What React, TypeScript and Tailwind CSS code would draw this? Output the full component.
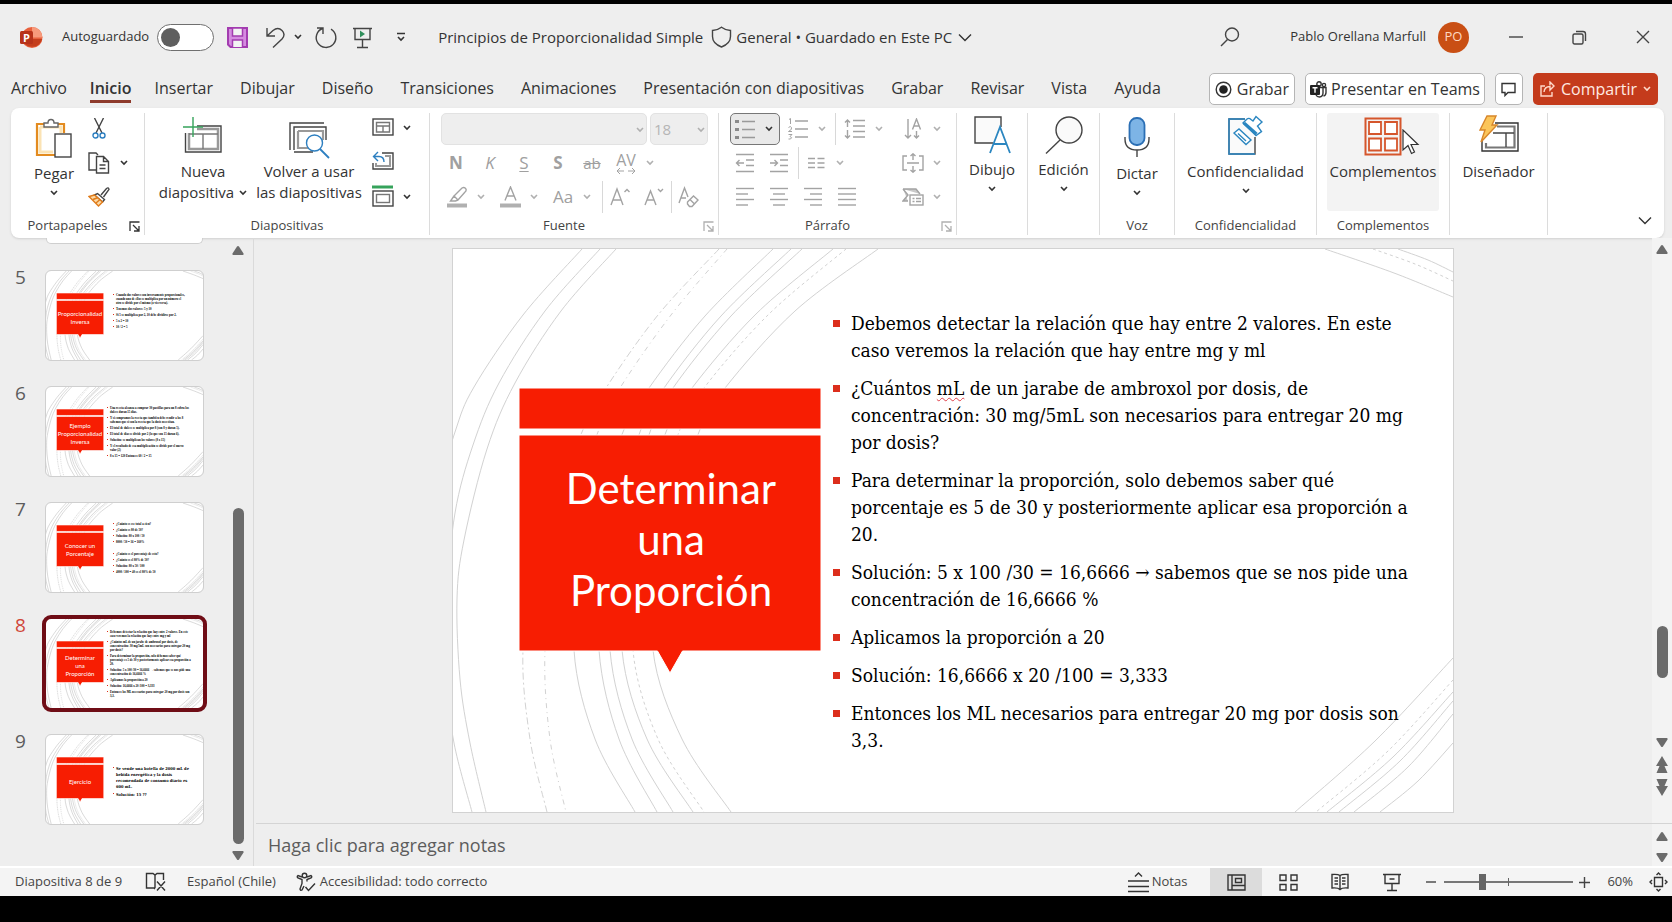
import type { ReactNode } from "react";

type Kids = { children?: ReactNode };

/* ---------- shared icon pieces ---------- */

function Svg({ w, h, children }: Kids & { w: number; h: number }) {
  return (
    <svg width={w} height={h} viewBox={`0 0 ${w} ${h}`} fill="none" stroke="#444" strokeWidth="1.4" className="block shrink-0" aria-hidden="true">
      {children}
    </svg>
  );
}

function Chev({ muted = false }: { muted?: boolean }) {
  return (
    <svg width="8" height="6" viewBox="0 0 8 6" fill="none" stroke={muted ? "#b0b0b0" : "#333"} strokeWidth="1.6" className="block shrink-0" aria-hidden="true">
      <path d="M1 1l3 3 3-3" />
    </svg>
  );
}

function BigChev() {
  return (
    <Svg w={14} h={9}>
      <path d="M1 1.5l6 6 6-6" stroke="#333" />
    </Svg>
  );
}

function Launcher({ muted = false }: { muted?: boolean }) {
  return (
    <svg width="11" height="11" viewBox="0 0 11 11" fill="none" stroke={muted ? "#b0b0b0" : "#333"} strokeWidth="1.3" className="block" aria-hidden="true">
      <path d="M1 10V1h9.5M4 4l5.5 5.5M10 5v5H5" />
    </svg>
  );
}

function Tri({ down = false }: { down?: boolean }) {
  return (
    <svg width="12" height="9" viewBox="0 0 12 9" fill="#6b6b6b" className="block" aria-hidden="true">
      <path d={down ? "M1 0h10q1 .6.5 1.6L7 8.4q-1 1-2 0L.5 1.6Q0 .6 1 0z" : "M1 9h10q1-.6.5-1.6L7 .6q-1-1-2 0L.5 7.400Q0 8.400 1 9z"} />
    </svg>
  );
}

function DoubleTri({ down = false }: { down?: boolean }) {
  return (
    <svg width="12" height="17" viewBox="0 0 12 17" fill="#6b6b6b" className="block" aria-hidden="true">
      <path d={down ? "M.5 0h11L8.500 7H12L6 17 0 7h3.500z" : "M6 0l6 10H8.500l3 7H.5l3-7H0z"} />
    </svg>
  );
}

/* ---------- title bar ---------- */

function TitleBar() {
  return (
    <header className="flex h-[66px] items-center whitespace-nowrap pl-5 pr-[22px] text-[#333]">
      <svg width="23" height="23" viewBox="0 0 23 23" className="shrink-0" aria-hidden="true">
        <circle cx="12" cy="11.500" r="10.500" fill="#e8603c" />
        <path d="M12 1a10.500 10.500 0 0 1 10.500 10.500H12z" fill="#f79a7b" />
        <path d="M2 13h20.300A10.500 10.500 0 0 1 2 13z" fill="#c43e1c" />
        <rect x="0" y="5" width="13" height="13" rx="1.500" fill="#b7331a" />
        <text x="3" y="15.500" fontSize="11" fontWeight="700" fill="#fff" fontFamily="Open Sans, sans-serif">P</text>
      </svg>
      <label className="ml-[19px] flex items-center gap-2 text-[13px]">
        Autoguardado
        <input type="checkbox" className="peer sr-only" />
        <span className="flex h-[27px] w-[57px] items-center rounded-full border border-[#6f6f6f] bg-white px-[3px]">
          <span className="size-[19px] rounded-full bg-[#5f5f5f]" />
        </span>
      </label>
      <div className="ml-3 flex items-center">
        <button type="button" aria-label="Guardar">
          <Svg w={23} h={23}>
            <path d="M2 2h19v19H4.500L2 18.500z" fill="#d58be0" stroke="#a33cb0" strokeWidth="2" />
            <path d="M6.500 2h10v8h-10zM6.500 21v-7h10v7" fill="#f3f3f3" stroke="#a33cb0" strokeWidth="1.500" />
          </Svg>
        </button>
        <button type="button" aria-label="Deshacer" className="ml-4 flex items-center gap-[8px]">
          <Svg w={21} h={23}>
            <path d="M2 2v8h8M2.500 9.500L8 4.500Q13 .5 17 4.500T17 13l-9 8.500" />
          </Svg>
          <Chev />
        </button>
        <button type="button" aria-label="Rehacer" className="ml-[12px]">
          <Svg w={24} h={23}>
            <path d="M3 2h6v6M8.500 2.500A9.800 9.800 0 1 0 17 3.200" />
          </Svg>
        </button>
        <button type="button" aria-label="Presentar desde el principio" className="ml-[14px]">
          <Svg w={21} h={23}>
            <path d="M1 2.500h19M3 2.500v11h15v-11M10.500 14v7M5 21.500h11" />
            <path d="M8 4.500l5 3.500-5 3.500z" fill="#2f8f5b" stroke="none" />
          </Svg>
        </button>
        <button type="button" aria-label="Personalizar barra" className="ml-[23px]">
          <Svg w={10} h={10}>
            <path d="M1 1.500h8M2 5l3 3 3-3" stroke="#333" strokeWidth="1.600" />
          </Svg>
        </button>
      </div>
      <div className="ml-[32px] flex items-center text-[15px]">
        <span>Principios de Proporcionalidad Simple</span>
        <span className="ml-[8px]">
          <Svg w={21} h={22}>
            <path d="M10.500 1.200Q14 4 19.500 4.500v6q0 7-9 10.500-9-3.500-9-10.500v-6Q7 4 10.500 1.200z" />
          </Svg>
        </span>
        <span className="ml-[4px]">General • Guardado en Este PC</span>
        <span className="ml-[6px]"><BigChev /></span>
      </div>
      <button type="button" aria-label="Buscar" className="ml-auto">
        <Svg w={20} h={20}>
          <circle cx="12" cy="7.500" r="6.500" />
          <path d="M7.500 12.500L1 19" />
        </Svg>
      </button>
      <span className="ml-[50px] text-[13px]">Pablo Orellana Marfull</span>
      <span className="ml-[12px] flex size-[31px] items-center justify-center rounded-full bg-[#c94f14] text-[13px] text-[#ffd9c2]">PO</span>
      <button type="button" aria-label="Minimizar" className="ml-[40px]">
        <Svg w={14} h={14}><path d="M0 7h14" /></Svg>
      </button>
      <button type="button" aria-label="Restaurar" className="ml-[49px]">
        <Svg w={15} h={15}>
          <rect x="1" y="4" width="10" height="10" rx="1.500" />
          <path d="M4 1.500h7q2.500 0 2.500 2.500v7" />
        </Svg>
      </button>
      <button type="button" aria-label="Cerrar" className="ml-[49px]">
        <Svg w={14} h={14}><path d="M1 1l12 12M13 1L1 13" /></Svg>
      </button>
    </header>
  );
}

/* ---------- tabs ---------- */

const tabs = ["Archivo", "Inicio", "Insertar", "Dibujar", "Diseño", "Transiciones", "Animaciones", "Presentación con diapositivas", "Grabar", "Revisar", "Vista", "Ayuda"];

function TabRow() {
  return (
    <div className="flex h-[38px] items-center justify-between whitespace-nowrap pl-[11px] pr-[14px] text-[#333]">
      <nav className="flex items-center gap-[27px] text-[16px]">
        {tabs.map((t) =>
          t === "Inicio" ? (
            <button key={t} type="button" className="-mx-1 border-b-[3px] border-[#8e3b2c] font-semibold leading-6">{t}</button>
          ) : (
            <button key={t} type="button" className="border-b-[3px] border-transparent leading-6">{t}</button>
          ),
        )}
      </nav>
      <div className="flex gap-[10px] text-[16px]">
        <button type="button" className="flex h-8 items-center gap-[5px] rounded-[5px] border border-[#b5b5b5] bg-white px-[5px]">
          <Svg w={17} h={17}>
            <circle cx="8.500" cy="8.500" r="7.300" stroke="#333" />
            <circle cx="8.500" cy="8.500" r="4.300" fill="#222" stroke="none" />
          </Svg>
          Grabar
        </button>
        <button type="button" className="flex h-8 items-center gap-[4px] rounded-[5px] border border-[#b5b5b5] bg-white px-[4px]">
          <Svg w={17} h={17}>
            <circle cx="9" cy="3" r="2.200" stroke="#333" />
            <circle cx="14" cy="4" r="1.600" stroke="#333" />
            <path d="M9 6.500h7v5q0 3-2.500 3.500M6 14q1 2 3.500 2 3.500-.5 3.500-4V6.500" stroke="#333" />
            <rect x="0" y="4" width="10" height="10" rx="1" fill="#222" stroke="none" />
            <path d="M2.500 6.700h5M5 6.700v5" stroke="#fff" />
          </Svg>
          Presentar en Teams
        </button>
        <button type="button" aria-label="Comentarios" className="flex h-8 w-7 items-center justify-center rounded-[5px] border border-[#b5b5b5] bg-white">
          <Svg w={15} h={15}><path d="M1 1.500h13v9H7l-3 3v-3H1z" stroke="#333" /></Svg>
        </button>
        <button type="button" className="flex h-8 items-center gap-[6px] rounded-[5px] bg-[#c43b1c] px-[7px] text-[#ffeae2]">
          <Svg w={15} h={16}>
            <path d="M5 5H1v10h11v-4M4 11q.5-5.500 6-5.500V9l4-4-4-4v3.200" stroke="#ffd9c9" />
          </Svg>
          Compartir
          <svg width="8" height="6" viewBox="0 0 8 6" fill="none" stroke="#ffd9c9" strokeWidth="1.600" aria-hidden="true"><path d="M1 1l3 3 3-3" /></svg>
        </button>
      </div>
    </div>
  );
}

/* ---------- ribbon ---------- */

function Group({ label, className, launcher, children }: Kids & { label?: string; className: string; launcher?: ReactNode }) {
  return (
    <section className={`relative flex shrink-0 flex-col border-r border-[#dcdcdc] ${className}`}>
      <div className="h-[102px]">{children}</div>
      <div className={`flex h-[20px] items-center justify-center text-[13px] leading-5 text-[#444] ${launcher ? "pr-[20px]" : ""}`}>{label}</div>
      {launcher && <button type="button" aria-label={`Más opciones de ${label}`} className="absolute bottom-[3px] right-[4px]">{launcher}</button>}
    </section>
  );
}

function Cell({ label, children }: Kids & { label: string }) {
  return (
    <button type="button" aria-label={label} className="flex h-[30px] w-[34px] shrink-0 items-center justify-center">
      {children}
    </button>
  );
}

function ChevCell() {
  return <span className="flex w-[14px] shrink-0 justify-center"><Chev muted /></span>;
}

function Bar() {
  return <span className="h-8 w-px shrink-0 bg-[#d8d8d8]" />;
}

function Big({ icon, text, chev = false, className = "" }: { icon: ReactNode; text: string; chev?: boolean; className?: string }) {
  return (
    <button type="button" className={`flex w-full flex-col items-center ${className}`}>
      {icon}
      <span className="mt-[5px] text-[15px] leading-5">{text}</span>
      {chev && <span className="mt-[7px]"><Chev /></span>}
    </button>
  );
}

const G = "#a3a3a3";

function Lines({ rows }: { rows: [number, number][] }) {
  return (
    <Svg w={20} h={20}>
      {rows.map(([a, b], i) => <path key={i} d={`M${a} ${1.500 + i * 5.500}H${b}`} stroke={G} />)}
    </Svg>
  );
}

function Clipboard() {
  return (
    <Group label="Portapapeles" className="w-[134px]" launcher={<Launcher />}>
      <div className="flex pl-[17px] pt-[5px]">
        <button type="button" className="flex w-[52px] flex-col items-center text-[15px] leading-5">
          <Svg w={38} h={41}>
            <path d="M9 6H2v31h18M22 6h7v9" stroke="#e38b1f" strokeWidth="2.200" />
            <path d="M5 9h21v6M5 9v25h13" stroke="#fbe3b4" strokeWidth="3" />
            <path d="M9 9V5h4q0-3.500 3-3.500T19 5h4v4z" fill="#fff" stroke="#666" />
            <rect x="20" y="16" width="16" height="23" fill="#fff" />
          </Svg>
          <span className="mt-1">Pegar</span>
          <span className="mt-[7px]"><Chev /></span>
        </button>
        <div className="ml-[8px] flex flex-col gap-3">
          <button type="button" aria-label="Cortar" className="flex h-[22px] w-[22px] justify-center">
            <Svg w={14} h={22}>
              <path d="M2.500 0L10 15M11.500 0L4 15" />
              <circle cx="3.500" cy="17.500" r="2.500" stroke="#2d7fc0" />
              <circle cx="10.500" cy="17.500" r="2.500" stroke="#2d7fc0" />
            </Svg>
          </button>
          <button type="button" aria-label="Copiar" className="flex items-center gap-[10px]">
            <Svg w={22} h={22}>
              <path d="M8 18H1V1h7l2 2" />
              <path d="M8.500 4.500h7l5 5V21h-12zM15.500 4.500v5h5M11.500 13h6M11.500 16.500h6" />
            </Svg>
            <Chev />
          </button>
          <button type="button" aria-label="Copiar formato" className="w-[22px]">
            <Svg w={22} h={22}>
              <path d="M13 9l5.500-6.500q2-1.500 2.500.8L15.500 11" />
              <path d="M9.500 7.500l7 6-2 2.500-8-7z" fill="#fff" />
              <path d="M6.500 9L1 10.500l9.500 9.500 4-4z" fill="#fbd9a5" stroke="#e07b1a" />
              <path d="M5 13.500l5-2M8 17l4-3.500" stroke="#e07b1a" />
            </Svg>
          </button>
        </div>
      </div>
    </Group>
  );
}

function Slides() {
  return (
    <Group label="Diapositivas" className="w-[285px]">
      <div className="flex whitespace-nowrap pt-[3px]">
        <button type="button" className="ml-[12px] flex w-[92px] flex-col items-center text-[15px] leading-[21px]">
          <Svg w={40} h={38}>
            <path d="M14 10h24v26H2.500V17M14 7" />
            <path d="M14 13h21v20H6V17" stroke="#999" strokeWidth="2.500" />
            <path d="M6 18h29M20 18v15" stroke="#777" />
            <path d="M0 11h20M10 1v20" stroke="#36a35b" />
          </Svg>
          <span className="mt-[7px]">Nueva</span>
          <span className="flex items-center gap-[5px]">diapositiva <Chev /></span>
        </button>
        <button type="button" className="ml-[6px] flex w-[108px] flex-col items-center text-[15px] leading-[21px]">
          <Svg w={42} h={44}>
            <path d="M2 34V7h34M6 34V11h32v13M6 36h19" />
            <path d="M10 15h25v9M10 15v17h13" stroke="#999" strokeWidth="2.200" />
            <circle cx="26.500" cy="27" r="8" stroke="#2d7fc0" fill="#fff" />
            <path d="M32 33l9 9" stroke="#2d7fc0" strokeWidth="1.800" />
          </Svg>
          <span className="mt-px">Volver a usar</span>
          <span>las diapositivas</span>
        </button>
        <div className="ml-[9px] flex flex-col pt-[1px]">
          <button type="button" aria-label="Diseño de diapositiva" className="flex h-[34px] items-start gap-[9px] pt-[1px]">
            <Svg w={22} h={19}>
              <rect x="1" y="1" width="20" height="16" />
              <path d="M4.500 4.500h13v9.500h-13zM4.500 8h13M11 8v6" stroke="#777" />
            </Svg>
            <span className="mt-[7px]"><Chev /></span>
          </button>
          <button type="button" aria-label="Restablecer" className="flex h-[34px] items-start">
            <Svg w={22} h={20}>
              <path d="M10 2h11v16H1v-6" />
              <path d="M13 5h5v10H4v-3" stroke="#999" strokeWidth="2" />
              <path d="M6 1L1.500 5.500 6 10M1.500 5.500H7q5 0 5 5.500" stroke="#2d7fc0" />
            </Svg>
          </button>
          <button type="button" aria-label="Sección" className="flex items-start gap-[9px]">
            <Svg w={22} h={22}>
              <path d="M0 2h21" stroke="#36a35b" strokeWidth="3" />
              <rect x="1" y="6" width="20" height="15" />
              <rect x="4.500" y="9.500" width="13" height="8" stroke="#777" />
            </Svg>
            <span className="mt-[9px]"><Chev /></span>
          </button>
        </div>
      </div>
    </Group>
  );
}

function FontGroup() {
  return (
    <Group label="Fuente" className="w-[289px]" launcher={<Launcher muted />}>
      <div className="flex flex-col gap-[2px] text-[#a0a0a0]">
        <div className="flex h-8 gap-[3px] pl-[11px]">
          <div className="relative w-[206px]">
            <select aria-label="Fuente" disabled className="h-8 w-full appearance-none rounded-[5px] border border-[#e2e2e2] bg-[#eeeeee] opacity-100"><option value="" /></select>
            <span className="pointer-events-none absolute right-[3px] top-[14px]"><Chev muted /></span>
          </div>
          <div className="relative w-[58px]">
            <select aria-label="Tamaño de fuente" disabled className="h-8 w-full appearance-none rounded-[5px] border border-[#e2e2e2] bg-[#eeeeee] pl-[3px] text-[15px] text-[#b5b5b5] opacity-100"><option>18</option></select>
            <span className="pointer-events-none absolute right-[3px] top-[14px]"><Chev muted /></span>
          </div>
        </div>
        <div className="flex h-8 items-center pl-[9px] text-[17px]">
          <Cell label="Negrita"><b>N</b></Cell>
          <Cell label="Cursiva"><i>K</i></Cell>
          <Cell label="Subrayado"><u className="underline-offset-2">S</u></Cell>
          <Cell label="Sombra"><b>S</b></Cell>
          <Cell label="Tachado"><s className="text-[15px]">ab</s></Cell>
          <Cell label="Espaciado entre caracteres">
            <span className="flex flex-col items-center text-[16px] leading-4">
              AV
              <Svg w={20} h={6}><path d="M4 0L1 3l3 3M1 3h7M16 0l3 3-3 3M19 3h-7" stroke={G} strokeWidth="1" /></Svg>
            </span>
          </Cell>
          <ChevCell />
        </div>
        <div className="flex h-8 items-center pl-[10px] text-[17px]">
          <Cell label="Color de resaltado">
            <Svg w={21} h={22}>
              <path d="M7 10l8-8q2.500-1.500 4 1 .5 2-1 3l-7 8zM7 10l-3.500 5h5l2.500-1" stroke={G} />
              <path d="M0 19.500h20" stroke="#b0b0b0" strokeWidth="4" />
            </Svg>
          </Cell>
          <ChevCell />
          <span className="w-[5px]" />
          <Cell label="Color de fuente">
            <Svg w={21} h={22}>
              <path d="M5 14.500L10.500 1 16 14.500M7 10h7" stroke={G} />
              <path d="M0 19.500h21" stroke="#b0b0b0" strokeWidth="4" />
            </Svg>
          </Cell>
          <ChevCell />
          <span className="w-[5px]" />
          <Cell label="Cambiar mayúsculas y minúsculas">Aa</Cell>
          <ChevCell />
          <span className="w-[8px]" />
          <Bar />
          <Cell label="Aumentar tamaño de fuente">
            <Svg w={20} h={20}><path d="M1 18L7 2l6 16M3 13h8M14.500 5L17 2.500 19.500 5" stroke={G} /></Svg>
          </Cell>
          <Cell label="Disminuir tamaño de fuente">
            <Svg w={20} h={20}><path d="M1 18L6.500 4 12 18M3 13h7M14 2l2.500 2.500L19 2" stroke={G} /></Svg>
          </Cell>
          <Bar />
          <Cell label="Borrar formato">
            <Svg w={22} h={22}><path d="M1 17L6.500 2l3.500 9M3 12h5M9.500 16l6-6 4.500 4-6 6.500h-2.500L9.500 18zM12 13.500l4.500 4.500" stroke={G} /></Svg>
          </Cell>
        </div>
      </div>
    </Group>
  );
}

function ParagraphGroup() {
  return (
    <Group label="Párrafo" className="w-[238px]" launcher={<Launcher muted />}>
      <div className="flex">
        <div className="flex w-[177px] shrink-0 flex-col gap-[2px] pl-[9px]">
          <div className="flex h-8 items-center">
            <button type="button" aria-label="Viñetas" className="ml-[2px] flex h-8 w-[50px] shrink-0 items-center gap-[10px] rounded-[5px] border border-[#777] bg-[#e9e9e9] pl-[4px]">
              <Svg w={20} h={20}>
                <path d="M7 2.500h13M7 10.500h13M7 18.500h13" stroke="#999" />
                <path d="M0 2.500h4M0 10.500h4M0 18.500h4" stroke="#8a8a8a" strokeWidth="3" />
              </Svg>
              <Chev />
            </button>
            <span className="w-px" />
            <Cell label="Numeración">
              <Svg w={20} h={22}>
                <path d="M7 3h13M7 11h13M7 19h13" stroke={G} />
                <path d="M1 1.500l1.500-1V6M.5 9.500q2-2 3 0T.5 13.500h3.500M.5 16.500H4L2 18.500q3 1 .5 2.500H.5" stroke={G} strokeWidth="1" />
              </Svg>
            </Cell>
            <ChevCell />
            <span className="w-[6px]" />
            <Bar />
            <span className="w-[2px]" />
            <Cell label="Interlineado">
              <Svg w={22} h={22}>
                <path d="M9 2.500h12M9 8h12M9 13.500h12M9 19h12M3.500 2v7M1 4.500L3.500 2 6 4.500M3.500 12v8M1 17.500L3.500 20 6 17.500" stroke={G} />
              </Svg>
            </Cell>
            <ChevCell />
          </div>
          <div className="flex h-8 items-center">
            <Cell label="Disminuir sangría">
              <Svg w={20} h={20}><path d="M1 1.500h18M11 7h8M11 12.500h8M1 18.500h18M1.500 10H9M4.500 7l-3 3 3 3" stroke={G} /></Svg>
            </Cell>
            <Cell label="Aumentar sangría">
              <Svg w={20} h={20}><path d="M1 1.500h18M11 7h8M11 12.500h8M1 18.500h18M1 10h7.500M5.500 7l3 3-3 3" stroke={G} /></Svg>
            </Cell>
            <span className="w-[2px]" />
            <Bar />
            <Cell label="Columnas">
              <Svg w={17} h={12}><path d="M0 1.500h7M0 6h7M0 10.500h7M9.500 1.500h7M9.500 6h7M9.500 10.500h7" stroke={G} /></Svg>
            </Cell>
            <ChevCell />
          </div>
          <div className="flex h-8 items-center">
            <Cell label="Alinear a la izquierda"><Lines rows={[[1, 19], [1, 13], [1, 19], [1, 13]]} /></Cell>
            <Cell label="Centrar"><Lines rows={[[1, 19], [4, 16], [1, 19], [4, 16]]} /></Cell>
            <Cell label="Alinear a la derecha"><Lines rows={[[1, 19], [7, 19], [1, 19], [7, 19]]} /></Cell>
            <Cell label="Justificar"><Lines rows={[[1, 19], [1, 19], [1, 19], [1, 19]]} /></Cell>
          </div>
        </div>
        <div className="flex w-[48px] shrink-0 flex-col gap-[2px]">
          <div className="flex h-8 items-center">
            <Cell label="Dirección del texto">
              <Svg w={18} h={22}><path d="M4 1v19M1 17l3 3 3-3M8.500 11.500L12.500 1l4 10.500M10 8h5M12.500 13v7M10 17.500l2.500 2.500 2.500-2.500" stroke={G} /></Svg>
            </Cell>
            <ChevCell />
          </div>
          <div className="flex h-8 items-center">
            <Cell label="Alinear texto">
              <Svg w={22} h={20}><path d="M5 3H1v14h4M17 3h4v14h-4M5 10h12M11 1v6M8.500 3L11 .8 13.500 3M11 13v6M8.500 17l2.500 2.200L13.500 17" stroke={G} /></Svg>
            </Cell>
            <ChevCell />
          </div>
          <div className="flex h-8 items-center">
            <Cell label="Convertir a SmartArt">
              <Svg w={22} h={18}>
                <path d="M1 1h13l4 5M1 1l5 6-5 6h5" stroke={G} fill="#c9c9c9" />
                <rect x="8" y="7" width="13" height="10" stroke={G} fill="#fff" />
                <path d="M10.500 10.500h2M14 10.500h5M10.500 13.500h2M14 13.500h5" stroke={G} />
              </Svg>
            </Cell>
            <ChevCell />
          </div>
        </div>
      </div>
    </Group>
  );
}

function Ribbon() {
  return (
    <div className="mx-[8px] ml-[11px] flex h-[130px] items-start whitespace-nowrap rounded-[8px] bg-white pt-[5px] text-[#333] shadow-sm">
      <Clipboard />
      <Slides />
      <FontGroup />
      <ParagraphGroup />
      <Group className="w-[71px]">
        <Big
          className="pt-[2px]"
          text="Dibujo"
          chev
          icon={
            <Svg w={38} h={39}>
              <path d="M20 28H2V2h26v10" fill="#fafafa" />
              <path d="M17 38L27 12l10 26M20.500 29h13" stroke="#2b86c0" strokeWidth="1.800" />
            </Svg>
          }
        />
      </Group>
      <Group className="w-[72px]">
        <Big
          className="pt-[2px]"
          text="Edición"
          chev
          icon={
            <Svg w={40} h={39}>
              <circle cx="25" cy="15" r="13" fill="#fafafa" />
              <path d="M16 25L2 38.500" />
            </Svg>
          }
        />
      </Group>
      <Group label="Voz" className="w-[75px]">
        <Big
          className="pt-[4px]"
          text="Dictar"
          chev
          icon={
            <Svg w={26} h={41}>
              <rect x="5.500" y="1" width="15" height="27" rx="7" fill="#7db4e6" stroke="#2b6fb5" strokeWidth="1.800" />
              <path d="M1 20v2q0 11 12 11t12-11v-2M13 33v7" />
            </Svg>
          }
        />
      </Group>
      <Group label="Confidencialidad" className="w-[142px]">
        <Big
          className="pt-[2px]"
          text="Confidencialidad"
          chev
          icon={
            <Svg w={38} h={41}>
              <path d="M18 4H2v35h26V22" fill="#fafafa" stroke="#444" />
              <path d="M18 4H2v35h26" stroke="#2d8ac9" />
              <path d="M7 18l5-4 12 11-5 4.500zM11 18.500l8 7.500" fill="#fff" stroke="#2b86c0" />
              <path d="M16 8l4-4q2-1.500 4 .5l2 1.500L29 1.500l6 5.500-4.500 4 4 5.500-5.500 4z" fill="#fff" stroke="#2b86c0" />
              <path d="M17 8l12.500 11" stroke="#2b86c0" strokeWidth="3" />
            </Svg>
          }
        />
      </Group>
      <Group label="Complementos" className="w-[133px]">
        <div className="relative mx-auto h-[98px] w-[112px] rounded-[3px] bg-[#f3f3f3]">
          <Big
            className="pt-[4px]"
            text="Complementos"
            icon={
              <Svg w={38} h={39}>
                <rect x="1.500" y="1.500" width="35" height="36" stroke="#d5562c" strokeWidth="2" />
                <path d="M5 5h12v12H5zM21 5h12v12H21zM5 21.500h12v12H5zM21 21.500h12v12H21z" fill="#fff" stroke="#d5562c" strokeWidth="1.800" />
              </Svg>
            }
          />
          <svg width="18" height="26" viewBox="0 0 18 26" className="absolute left-[75px] top-[16px]" fill="#fff" stroke="#333" strokeWidth="1.200" aria-hidden="true">
            <path d="M1 1v20l5-4.500 3.500 8 3-1.500-3.500-7.500H16z" />
          </svg>
        </div>
      </Group>
      <Group className="w-[98px]">
        <Big
          className="pt-[2px]"
          text="Diseñador"
          icon={
            <Svg w={40} h={41}>
              <path d="M16 8h23v28H3V26" stroke="#333" />
              <path d="M18 11.500h17.500v21H7V28" stroke="#777" strokeWidth="2.200" />
              <path d="M14 18h21M27 18v14" />
              <path d="M8 1h9l-4 9h5L2 27l4-12H1z" fill="#fbc55a" stroke="#d8862a" />
            </Svg>
          }
        />
      </Group>
      <button type="button" aria-label="Contraer la cinta" className="mb-[13px] ml-auto mr-[12px] self-end"><BigChev /></button>
    </div>
  );
}

/* ---------- slide artwork ---------- */

type Pt = [number, number];

function curve(pts: Pt[]) {
  let d = `M${pts[0][0]} ${pts[0][1]}`;
  for (let i = 0; i < pts.length - 1; i++) {
    const p0 = pts[Math.max(i - 1, 0)];
    const [p1, p2] = [pts[i], pts[i + 1]];
    const p3 = pts[Math.min(i + 2, pts.length - 1)];
    d += `C${p1[0] + (p2[0] - p0[0]) / 6} ${p1[1] + (p2[1] - p0[1]) / 6} ${p2[0] - (p3[0] - p1[0]) / 6} ${p2[1] - (p3[1] - p1[1]) / 6} ${p2[0]} ${p2[1]}`;
  }
  return d;
}

const arcs: { pts: Pt[]; dash?: string }[] = [
  { pts: [[129, 0], [70, 66], [21, 138], [2, 183], [-20, 260]] },
  { pts: [[147, 0], [92, 62], [46, 134], [20, 196], [2, 264], [-6, 350], [-6, 430], [1, 494], [19, 563]] },
  { pts: [[163, 0], [108, 62], [62, 134], [34, 200], [11, 291], [4, 350], [7, 430], [17, 494], [33, 563]] },
  { pts: [[266, 0], [205, 66], [153, 139], [129, 183], [84, 300], [70, 401], [77, 490], [94, 563]], dash: "7 3 2 3" },
  { pts: [[274, 0], [218, 66], [167, 139], [145, 183], [104, 300], [92, 401], [97, 490], [113, 563]], dash: "5 4 1 4" },
  { pts: [[320, 0], [252, 67], [196, 139], [170, 183], [130, 300], [121, 401], [142, 490], [182, 563]] },
  { pts: [[338, 0], [268, 67], [211, 139], [187, 183], [152, 300], [146, 401], [166, 490], [204, 563]] },
  { pts: [[349, 0], [278, 67], [220, 139], [197, 183], [163, 300], [157, 401], [179, 490], [220, 563]] },
  { pts: [[380, 0], [303, 65], [239, 139], [213, 183], [176, 300], [169, 401], [194, 490], [240, 563]] },
  { pts: [[393, 0], [316, 65], [251, 139], [226, 183], [188, 300], [180, 401], [205, 490], [251, 563]], dash: "3 3" },
  { pts: [[425, 0], [342, 62], [272, 139], [246, 183], [208, 300], [200, 401], [229, 490], [278, 563]] },
  { pts: [[872, 0], [941, 24], [1000, 48]] },
  { pts: [[920, 0], [962, 15], [1000, 32]], dash: "3 3" },
  { pts: [[945, 0], [975, 11], [1000, 23]] },
  { pts: [[1000, 409], [922, 492], [842, 563]] },
  { pts: [[1000, 431], [935, 502], [863, 563]], dash: "3 3" },
  { pts: [[1000, 443], [940, 508], [874, 563]] },
  { pts: [[1000, 452], [947, 512], [886, 563]] },
  { pts: [[1000, 465], [955, 518], [901, 563]] },
  { pts: [[1000, 494], [965, 532], [927, 563]] },
];

function Artwork({ width, color }: { width: number; color: string }) {
  return (
    <svg viewBox="0 0 1000 563" preserveAspectRatio="none" className="absolute inset-0 size-full" fill="none" aria-hidden="true">
      {arcs.map((a, i) => (
        <path key={i} d={curve(a.pts)} stroke={color} strokeWidth={width} strokeDasharray={a.dash} />
      ))}
      <path d="M66 139h302v41H66zM66 186h302v216H229.500l-12.500 22-12.500-22H66z" fill="#f71d02" stroke="#fff" strokeWidth={width} />
    </svg>
  );
}

const body: string[][] = [
  ["Debemos detectar la relación que hay entre 2 valores. En este", "caso veremos la relación que hay entre mg y ml"],
  ["¿Cuántos mL de un jarabe de ambroxol por dosis, de", "concentración: 30 mg/5mL son necesarios para entregar 20 mg", "por dosis?"],
  ["Para determinar la proporción, solo debemos saber qué", "porcentaje es 5 de 30 y posteriormente aplicar esa proporción a", "20."],
  ["Solución: 5 x 100 /30 = 16,6666 → sabemos que se nos pide una", "concentración de 16,6666 %"],
  ["Aplicamos la proporción a 20"],
  ["Solución: 16,6666 x 20 /100 = 3,333"],
  ["Entonces los ML necesarios para entregar 20 mg por dosis son", "3,3."],
];

function Line({ text }: { text: string }) {
  const [a, b] = text.split("Cuántos mL");
  return (
    <span className="block">
      {b === undefined ? text : (
        <>
          {a}Cuántos <span className="underline decoration-[#e0404a] decoration-wavy decoration-1 underline-offset-2">mL</span>{b}
        </>
      )}
    </span>
  );
}

function MainSlide() {
  return (
    <article className="relative flex h-[563px] w-[1000px] shrink-0 overflow-hidden bg-white outline outline-[#d2d2d2]">
      <Artwork width={1} color="#d2d2d2" />
      <h1 className="relative ml-[66px] mt-[214px] w-[304px] text-center font-['Lato',sans-serif] text-[42px] leading-[51px] text-white">
        Determinar<br />una<br />Proporción
      </h1>
      <ul className="relative ml-[10px] mt-[61px] flex flex-col gap-[11px] whitespace-nowrap font-['DejaVu_Serif_Condensed','DejaVu_Serif',serif] text-[19px] leading-[27px] text-black">
        {body.map((p) => (
          <li key={p[0]} className="flex">
            <span className="mt-[10px] size-[7px] shrink-0 bg-[#dc2e1c]" />
            <p className="ml-[11px]">{p.map((l) => <Line key={l} text={l} />)}</p>
          </li>
        ))}
      </ul>
    </article>
  );
}

/* ---------- thumbnails ---------- */

type Thumb = { n: number; title: string[]; body: string[][]; place: string };

const small = "font-['Liberation_Serif',serif] text-[3px] leading-[4px]";
const large = "font-['DejaVu_Serif_Condensed','DejaVu_Serif',serif] text-[4px] leading-[6px]";

const thumbs: Thumb[] = [
  { n: 5, title: ["Proporcionalidad", "Inversa"], place: "ml-[9px] mt-[22px]", body: [["Cuando dos valores son inversamente proporcionales,", "cuando uno de ellos se multiplica por un número el", "otro se divide por el mismo (o viceversa)."], ["Tenemos dos valores: 5 y 10"], ["Si 5 se multiplica por 2, 10 debe dividirse por 2."], ["5 x 2 = 10"], ["10 / 2 = 5"]] },
  { n: 6, title: ["Ejemplo", "Proporcionalidad", "Inversa"], place: "ml-[3px] mt-[19px]", body: [["Una receta alcanza a comprar 30 pastillas para un 8 cobra los", "dulces duran 15 días."], ["Y si compramos la receta que también debe rendir a los 8", "sabemos que si son la receta que la dosis necesitan."], ["El total de dulces se multiplica por 8 (son 8 y duran 5)."], ["El total de días se divide por 2 (lo que son 15 duran 6)."], ["Solución: se multiplican los valores (8 x 15)"], ["Y el resultado de esa multiplicación se divide por el nuevo", "valor (2)"], ["8 x 15 = 120 Entonces 60 / 2 = 15"]] },
  { n: 7, title: ["Conocer un", "Porcentaje"], place: "ml-[9px] mt-[19px]", body: [["¿Cuánto es ese total a cien?"], ["¿Cuánto es 80 de 50?"], ["Solución: 80 x 100 / 50"], ["8000 / 50 = 16 = 160%"], [], ["¿Cuánto es el porcentaje de esto?"], ["¿Cuánto es el 80% de 50?"], ["Solución: 80 x 50 / 100"], ["4000 / 100 = 40 es el 80% de 50"]] },
  { n: 8, title: ["Determinar", "una", "Proporción"], place: "ml-[3px] mt-[11px]", body },
  { n: 9, title: ["Ejercicio"], place: "ml-[9px] mt-[31px]", body: [["Se vende una botella de 2000 mL de", "bebida energética y la dosis", "recomendada de consumo diario es", "600 mL."], ["Solución: 15 ??"]] },
];

function ThumbCard({ t }: { t: Thumb }) {
  const selected = t.n === 8;
  return (
    <li className="flex h-[89px]">
      <span className={`w-[46px] pl-[15px] text-[19px] leading-3 ${selected ? "text-[#d0473a]" : "text-[#5c5c5c]"}`}>{t.n}</span>
      <div className={`relative flex h-[89px] w-[157px] items-start rounded-[5px] bg-white ${selected ? "outline-[4px] outline-[#6f0d16]" : "outline outline-[#cfcfcf]"}`}>
        <div className="absolute inset-0 overflow-hidden rounded-[5px]"><Artwork width={4} color="#c4c4c4" /></div>
        <p className="relative ml-[10px] mt-[30px] flex h-[34px] w-[48px] flex-col items-center justify-center whitespace-nowrap font-['Lato',sans-serif] text-[6px] leading-[8px] text-white">
          {t.title.map((l) => <span key={l}>{l}</span>)}
        </p>
        <ul className={`relative flex flex-col gap-[2px] whitespace-nowrap font-bold text-black ${t.n === 9 ? large : small} ${t.place}`}>
          {t.body.map((p, i) => (
            <li key={i} className="flex min-h-1">
              {p.length > 0 && <span className="mr-[2px] mt-[1px] size-px bg-[#dc2e1c]" />}
              <p>{p.map((l, j) => <span key={j} className="block">{l}</span>)}</p>
            </li>
          ))}
        </ul>
      </div>
    </li>
  );
}

function ThumbPane() {
  return (
    <aside className="flex w-[254px] shrink-0 border-r border-[#dadada]">
      <ol className="flex flex-1 flex-col gap-[27px] overflow-hidden">
        <li className="ml-[46px] h-[6px] w-[157px] shrink-0 rounded-b-[5px] border border-t-0 border-[#cfcfcf] bg-white" />
        {thumbs.map((t) => <ThumbCard key={t.n} t={t} />)}
      </ol>
      <div className="mr-[9px] flex w-[12px] flex-col items-center pb-[6px] pt-[8px]">
        <Tri />
        <span className="mt-auto h-[336px] w-[11px] rounded-full bg-[#6b6b6b]" />
        <span className="mt-[7px]"><Tri down /></span>
      </div>
    </aside>
  );
}

/* ---------- editor ---------- */

function Editor() {
  return (
    <main className="flex min-w-0 flex-1 flex-col">
      <div className="flex h-[585px]">
        <div className="flex flex-1 justify-center pt-[11px]"><MainSlide /></div>
        <div className="flex w-[20px] flex-col items-center bg-[#f3f3f3] pt-[7px]">
          <Tri />
          <span className="mt-[372px] h-[52px] w-[11px] rounded-full bg-[#6b6b6b]" />
          <span className="mt-[60px]"><Tri down /></span>
          <span className="mt-[9px]"><DoubleTri /></span>
          <span className="mt-[6px]"><DoubleTri down /></span>
        </div>
      </div>
      <div className="ml-[2px] flex flex-1 border-t border-[#d4d4d4]">
        <input
          type="text"
          aria-label="Notas"
          placeholder="Haga clic para agregar notas"
          className="min-w-0 flex-1 bg-transparent pl-3 text-[18px] outline-none placeholder:text-[#5c5c5c] placeholder:opacity-100"
        />
        <div className="flex w-[20px] flex-col items-center justify-between bg-[#f3f3f3] pb-[4px] pt-[8px]">
          <Tri />
          <Tri down />
        </div>
      </div>
    </main>
  );
}

/* ---------- status bar ---------- */

function StatusBar() {
  return (
    <footer className="flex h-[30px] shrink-0 items-center whitespace-nowrap border-t-2 border-white bg-[#f4f4f4] pl-[15px] pr-1 text-[13px] text-[#444]">
      <span>Diapositiva 8 de 9</span>
      <span className="ml-[23px]">
        <Svg w={21} h={20}>
          <path d="M10 17l-1-1H1.500V1.500H8L10 3l2-1.500h6.500V8M10 3v13M12 9.500l8 9M20 9.500l-8 9" stroke="#333" />
        </Svg>
      </span>
      <span className="ml-[21px]">Español (Chile)</span>
      <span className="ml-[20px]">
        <Svg w={20} h={20}>
          <circle cx="8.500" cy="3.500" r="2.300" stroke="#333" />
          <path d="M6 5L2 3.500q-1.500 1 0 2.500l4 1.500v4L4 17q.5 2 2 1l2-4M11 5l4-1.500q1.500 1 0 2.500l-4 1.500v2M9.500 15l3 3.500 6.500-7" stroke="#333" />
        </Svg>
      </span>
      <span className="ml-[4px]">Accesibilidad: todo correcto</span>
      <button type="button" className="ml-auto flex items-center gap-[3px]">
        <Svg w={21} h={22}><path d="M0 10h21M0 15.500h21M0 20.500h21M7 5.500L10.500 2 14 5.500" stroke="#333" /></Svg>
        Notas
      </button>
      <button type="button" aria-label="Normal" className="ml-[23px] flex h-7 w-[52px] items-center justify-center bg-[#dcdcdc]">
        <Svg w={19} h={17}><path d="M1 1h17v15H1zM5 1v15M5 11.500h13M8.500 4.500h6v4h-6z" stroke="#333" /></Svg>
      </button>
      <button type="button" aria-label="Clasificador de diapositivas" className="flex w-[52px] justify-center">
        <Svg w={19} h={17}><path d="M1 1h6v5.500H1zM12 1h6v5.500h-6zM1 10.500h6V16H1zM12 10.500h6V16h-6z" stroke="#333" /></Svg>
      </button>
      <button type="button" aria-label="Vista de lectura" className="flex w-[52px] justify-center">
        <Svg w={18} h={18}><path d="M9 2.500Q7 1 1 1.500V15q6-.5 8 1.500 2-2 8-1.500V1.500Q11 1 9 2.500v14M3.500 5H7M3.500 8H7M3.500 11H7M11 5h3.500M11 8h3.500M11 11h3.500" stroke="#333" /></Svg>
      </button>
      <button type="button" aria-label="Presentación con diapositivas" className="flex w-[52px] justify-center">
        <Svg w={18} h={19}><path d="M0 1.500h18M2 1.500v9h14v-9M6.500 6h5M9 11v6M4 17.500h10" stroke="#333" /></Svg>
      </button>
      <button type="button" aria-label="Alejar" className="ml-[8px]"><Svg w={10} h={10}><path d="M0 5h10" /></Svg></button>
      <div className="relative ml-[8px] flex w-[129px] items-center">
        <input
          type="range"
          aria-label="Zoom"
          min={0}
          max={100}
          defaultValue={28}
          className="h-4 w-full appearance-none bg-transparent [&::-webkit-slider-runnable-track]:h-[2px] [&::-webkit-slider-runnable-track]:bg-[#777] [&::-webkit-slider-thumb]:-mt-[7px] [&::-webkit-slider-thumb]:h-4 [&::-webkit-slider-thumb]:w-[7px] [&::-webkit-slider-thumb]:appearance-none [&::-webkit-slider-thumb]:bg-[#666]"
        />
        <span className="pointer-events-none absolute left-[64px] top-[4px] h-[8px] w-px bg-[#666]" />
      </div>
      <button type="button" aria-label="Acercar" className="ml-[6px]"><Svg w={11} h={11}><path d="M0 5.500h11M5.500 0v11" /></Svg></button>
      <span className="ml-[17px]">60%</span>
      <button type="button" aria-label="Ajustar a la ventana" className="ml-[16px]">
        <Svg w={19} h={20}><path d="M5.500 5.500h8v9h-8zM7.500 3l2-2 2 2M7.500 17l2 2 2-2M3 8l-2 2 2 2M16 8l2 2-2 2" stroke="#333" /></Svg>
      </button>
    </footer>
  );
}

export default function App() {
  return (
    <div className="flex h-screen flex-col overflow-hidden bg-black pb-[26px] pt-1 font-['Open_Sans',sans-serif]">
      <div className="flex min-h-0 flex-1 flex-col bg-[#eeeeee]">
        <TitleBar />
        <TabRow />
        <Ribbon />
        <div className="flex min-h-0 flex-1">
          <ThumbPane />
          <Editor />
        </div>
        <StatusBar />
      </div>
    </div>
  );
}
